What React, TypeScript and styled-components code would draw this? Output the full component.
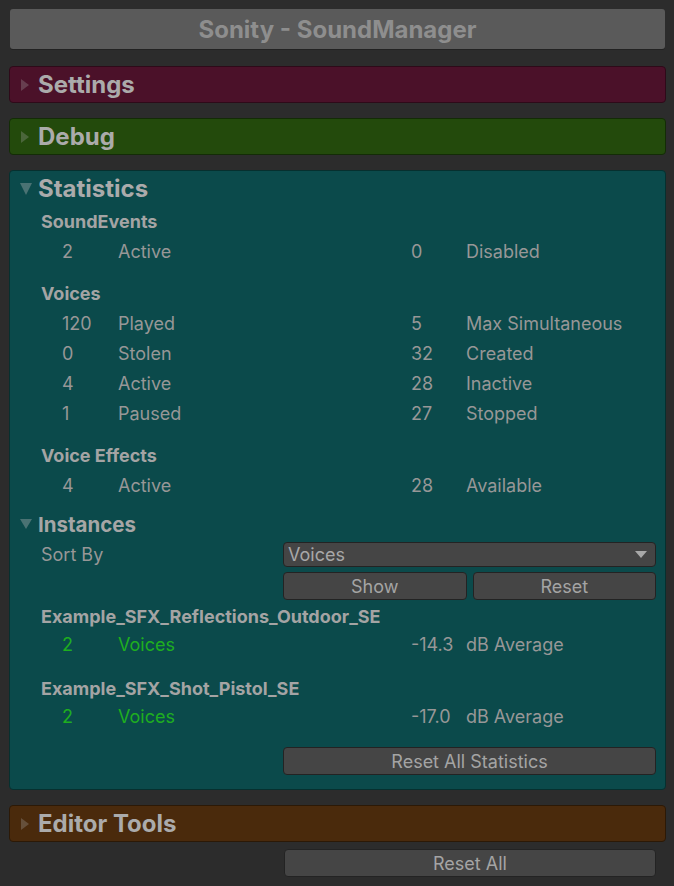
import React from 'react'
import styled, { createGlobalStyle } from 'styled-components'

const GlobalStyle = createGlobalStyle`
  html, body {
    margin: 0;
    padding: 0;
    background: #2c2c2c;
  }
  body {
    font-family: Inter, 'Noto Sans', sans-serif;
  }
`

type Stat = { value: string; label: string }
type StatRow = [Stat, Stat?]

type StatGroup = {
  title: string
  rows: StatRow[]
}

const groups: StatGroup[] = [
  {
    title: 'SoundEvents',
    rows: [[{ value: '2', label: 'Active' }, { value: '0', label: 'Disabled' }]],
  },
  {
    title: 'Voices',
    rows: [
      [{ value: '120', label: 'Played' }, { value: '5', label: 'Max Simultaneous' }],
      [{ value: '0', label: 'Stolen' }, { value: '32', label: 'Created' }],
      [{ value: '4', label: 'Active' }, { value: '28', label: 'Inactive' }],
      [{ value: '1', label: 'Paused' }, { value: '27', label: 'Stopped' }],
    ],
  },
  {
    title: 'Voice Effects',
    rows: [[{ value: '4', label: 'Active' }, { value: '28', label: 'Available' }]],
  },
]

const instances = [
  { name: 'Example_SFX_Reflections_Outdoor_SE', voices: '2', db: '-14.3' },
  { name: 'Example_SFX_Shot_Pistol_SE', voices: '2', db: '-17.0' },
]

export default function App(): JSX.Element {
  return (
    <Page>
      <GlobalStyle />
      <TitleBar>Sonity - SoundManager</TitleBar>

      <Foldout $bg="#4b1129" $border="#2e0a19">
        <FoldoutHeader>
          <Arrow />
          Settings
        </FoldoutHeader>
      </Foldout>

      <Foldout $bg="#234a0c" $border="#132c06">
        <FoldoutHeader>
          <Arrow />
          Debug
        </FoldoutHeader>
      </Foldout>

      <Foldout $bg="#0b4a4b" $border="#06302f" $open>
        <FoldoutHeader $open>
          <Arrow $down />
          Statistics
        </FoldoutHeader>

        {groups.map((group, i) => (
          <Group key={group.title} $first={i === 0}>
            <GroupTitle>{group.title}</GroupTitle>
            {group.rows.map(([left, right], j) => (
              <Row key={j}>
                <Value>{left.value}</Value>
                <Label>{left.label}</Label>
                <Value>{right ? right.value : ''}</Value>
                <Label>{right ? right.label : ''}</Label>
              </Row>
            ))}
          </Group>
        ))}

        <SubHeader>
          <Arrow $down $small />
          Instances
        </SubHeader>

        <FieldRow>
          <FieldLabel>Sort By</FieldLabel>
          <Dropdown>
            <span>Voices</span>
            <Caret />
          </Dropdown>
        </FieldRow>

        <ButtonRow $top={5}>
          <Button>Show</Button>
          <Button>Reset</Button>
        </ButtonRow>

        {instances.map((inst) => (
          <Instance key={inst.name}>
            <InstanceName>{inst.name}</InstanceName>
            <InstanceRow>
              <Value $green>{inst.voices}</Value>
              <Label $green>Voices</Label>
              <Value>{inst.db}</Value>
              <Label>dB Average</Label>
            </InstanceRow>
          </Instance>
        ))}

        <ButtonRow $top={17}>
          <Button>Reset All Statistics</Button>
        </ButtonRow>
      </Foldout>

      <Foldout $bg="#4a2a0c" $border="#2c1906">
        <FoldoutHeader>
          <Arrow />
          Editor Tools
        </FoldoutHeader>
      </Foldout>

      <FooterRow>
        <Button>Reset All</Button>
      </FooterRow>
    </Page>
  )
}

const Page = styled.div`
  padding: 9px 8px 9px 9px;
  display: flex;
  flex-direction: column;
`

const TitleBar = styled.div`
  margin: 0 1px 17px;
  height: 40px;
  background: #5a5a5a;
  border-radius: 3px;
  box-shadow: 0 1px 0 #222;
  display: flex;
  align-items: center;
  justify-content: center;
  color: #8e8e8e;
  font-weight: 700;
  font-size: 24px;
`

const Foldout = styled.div<{ $bg: string; $border: string; $open?: boolean }>`
  background: ${(p) => p.$bg};
  border: 1px solid ${(p) => p.$border};
  border-radius: 4px;
  margin-bottom: 15px;
  padding: ${(p) => (p.$open ? '0 9px 14px 31px' : '0')};
`

const FoldoutHeader = styled.div<{ $open?: boolean }>`
  height: 35px;
  margin-left: ${(p) => (p.$open ? '-31px' : '0')};
  display: flex;
  align-items: center;
  padding-left: ${(p) => (p.$open ? '10px' : '11px')};
  color: #ababab;
  font-weight: 700;
  font-size: 24px;
`

const Arrow = styled.span<{ $down?: boolean; $small?: boolean }>`
  width: 0;
  height: 0;
  margin-right: ${(p) => (p.$down ? '6px' : '9px')};
  border-style: solid;
  border-color: transparent;
  ${(p) =>
    p.$down
      ? `border-width: ${p.$small ? '10px 6px 0 6px' : '12px 6px 0 6px'};
         border-top-color: rgba(150, 165, 165, 0.45);`
      : `border-width: 6px 0 6px 8px;
         border-left-color: rgba(170, 170, 170, 0.3);`}
`

const Group = styled.div<{ $first?: boolean }>`
  margin-top: ${(p) => (p.$first ? '0' : '12px')};
`

const GroupTitle = styled.div`
  height: 30px;
  display: flex;
  align-items: center;
  color: #a4a4a4;
  font-weight: 700;
  font-size: 18px;
`

const Row = styled.div`
  height: 30px;
  display: grid;
  grid-template-columns: 56px 293px 55px 1fr;
  align-items: center;
  padding-left: 21px;
  font-size: 18px;
`

const Value = styled.span<{ $green?: boolean }>`
  color: ${(p) => (p.$green ? '#1fae1f' : '#979797')};
`

const Label = styled.span<{ $green?: boolean }>`
  color: ${(p) => (p.$green ? '#1fae1f' : '#979797')};
  white-space: nowrap;
`

const SubHeader = styled.div`
  height: 30px;
  margin: 9px 0 0 -21px;
  display: flex;
  align-items: center;
  color: #a6a6a6;
  font-weight: 700;
  font-size: 20.5px;
`

const FieldRow = styled.div`
  margin-top: 3px;
  display: grid;
  grid-template-columns: 242px 1fr;
  align-items: center;
`

const FieldLabel = styled.span`
  color: #979797;
  font-size: 18px;
`

const Dropdown = styled.div`
  height: 23px;
  background: #454545;
  border: 1px solid #232323;
  border-radius: 4px;
  display: flex;
  align-items: center;
  justify-content: space-between;
  padding: 0 8px 0 4px;
  color: #a8a8a8;
  font-size: 18px;
`

const Caret = styled.span`
  width: 0;
  height: 0;
  border-style: solid;
  border-color: transparent;
  border-width: 7px 6px 0 6px;
  border-top-color: #a8a8a8;
`

const ButtonRow = styled.div<{ $top?: number }>`
  margin-top: ${(p) => (p.$top ?? 6)}px;
  margin-left: 242px;
  display: flex;
  gap: 6px;
`

const Button = styled.button`
  flex: 1;
  height: 28px;
  background: #454545;
  border: 1px solid #232323;
  border-radius: 4px;
  color: #a4a4a4;
  font-family: Inter, 'Noto Sans', sans-serif;
  font-size: 18px;
  padding: 0;
`

const Instance = styled.div`
  margin-top: 2px;

  & + & {
    margin-top: 16px;
  }
`

const InstanceName = styled.div`
  height: 28px;
  display: flex;
  align-items: center;
  color: #a4a4a4;
  font-weight: 700;
  font-size: 18px;
`

const InstanceRow = styled(Row)`
  height: 28px;
`

const FooterRow = styled.div`
  margin: -8px 10px 0 275px;
  display: flex;
`
